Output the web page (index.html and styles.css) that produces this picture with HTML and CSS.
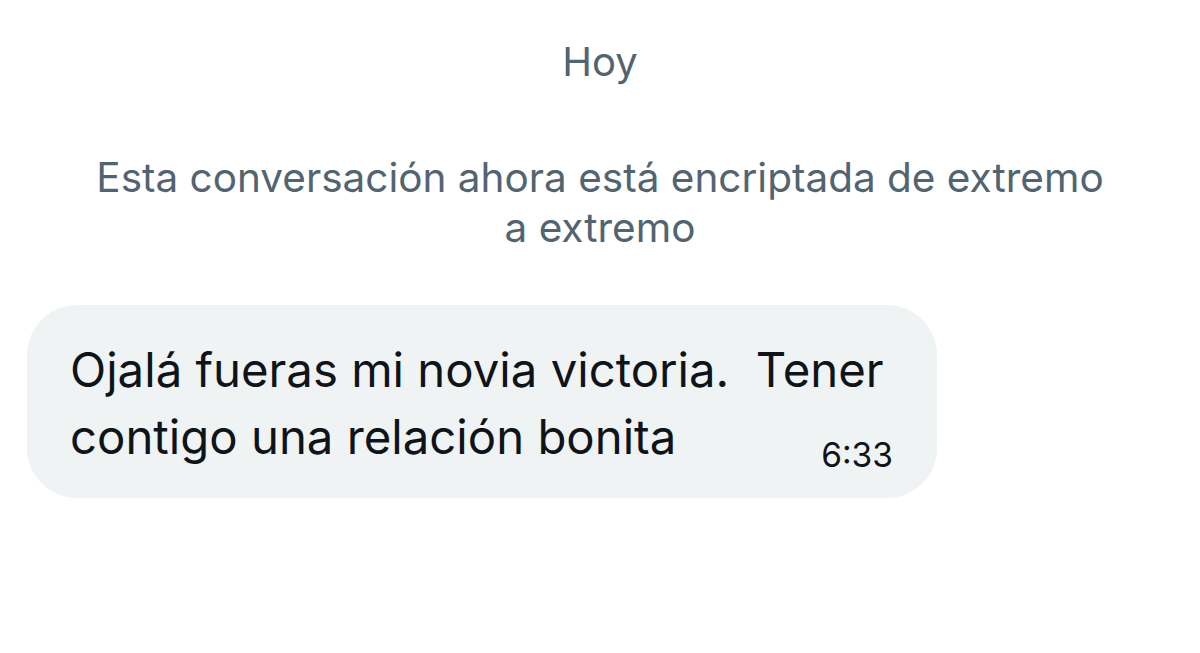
FILE: index.html
```html
<!DOCTYPE html>
<html lang="es">
<head>
    <meta charset="UTF-8">
    <meta name="viewport" content="width=device-width, initial-scale=1.0">
    <title>Mensajes</title>
    <link rel="stylesheet" href="styles.css">
</head>
<body>
    <div class="chat">
        <p class="dia">Hoy</p>
        <p class="aviso">Esta conversación ahora está encriptada de extremo a extremo</p>

        <div class="burbuja">
            <p class="mensaje"><span>Ojalá fueras mi novia victoria.&nbsp; Tener</span><br><span>contigo una relación bonita</span><span class="hora">6:33</span></p>
        </div>
    </div>
</body>
</html>
```

FILE: styles.css
```css
body {
    margin: 0;
    background: #ffffff;
    font-family: Inter, "Liberation Sans", sans-serif;
}
.chat {
    padding: 42px 0 0 0;
}
.dia {
    margin: 0;
    text-align: center;
    font-size: 40px;
    line-height: 40px;
    color: #536471;
}
.aviso {
    margin: 71px auto 0 auto;
    max-width: 1012px;
    text-align: center;
    font-size: 40.5px;
    line-height: 50px;
    color: #536471;
}
.burbuja {
    margin: 52px 0 0 27px;
    width: 910px;
    box-sizing: border-box;
    padding: 31px 44px 28px 43px;
    background: #eff3f4;
    border-radius: 50px;
}
.mensaje {
    margin: 0;
    font-size: 47.3px;
    line-height: 67px;
    color: #0f1419;
}
.hora {
    float: right;
    margin-top: 36px;
    font-size: 33.5px;
    line-height: 32px;
    color: #0f1419;
}
```
